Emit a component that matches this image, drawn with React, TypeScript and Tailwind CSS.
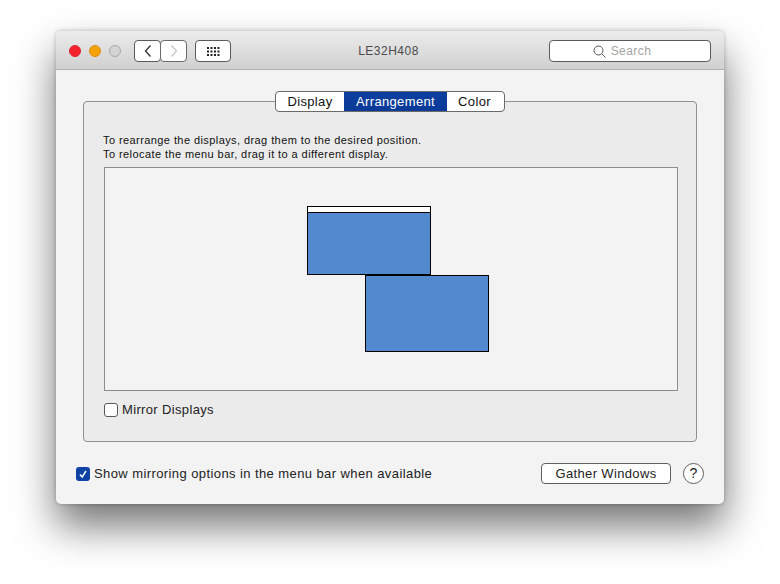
import React from 'react';

const font = { fontFamily: '"Liberation Sans", Arial, sans-serif' };

const TrafficLights = () => (
  <div className="flex gap-2">
    <div className="w-3 h-3 rounded-full bg-[#f5222e] border border-[#d9262f]" />
    <div className="w-3 h-3 rounded-full bg-[#f5a20a] border border-[#d8900f]" />
    <div className="w-3 h-3 rounded-full bg-[#d4d4d4] border border-[#a8a8a8]" />
  </div>
);

const NavButtons = () => (
  <div className="flex ml-[13px]">
    <div className="w-[27px] h-[22px] bg-white border border-[#5a5a5a] rounded-[4px] flex items-center justify-center">
      <svg width="10" height="14" viewBox="0 0 10 14" fill="none">
        <path d="M7.5 1.5 L2.5 7 L7.5 12.5" stroke="#333" strokeWidth="1.3" />
      </svg>
    </div>
    <div className="w-[27px] h-[22px] -ml-px bg-white border border-[#6a6a6a] rounded-[4px] flex items-center justify-center">
      <svg width="10" height="14" viewBox="0 0 10 14" fill="none">
        <path d="M2.5 1.5 L7.5 7 L2.5 12.5" stroke="#c8c8c8" strokeWidth="1.3" />
      </svg>
    </div>
  </div>
);

const GridButton = () => (
  <div className="w-9 h-[22px] ml-2 bg-white border border-[#5a5a5a] rounded-[4px] flex items-center justify-center">
    <svg width="15" height="11" viewBox="0 0 15 11" fill="#222">
      {[0, 1, 2].map((row) =>
        [0, 1, 2, 3].map((col) => (
          <rect key={`${row}-${col}`} x={col * 3.5 + 1} y={row * 3.5 + 1} width="2" height="2" />
        )),
      )}
    </svg>
  </div>
);

const TitleBar = () => (
  <div className="h-[39px] shrink-0 flex items-center pt-[2px] pl-[13px] pr-[13px] rounded-t-[5px] border-b border-[#b1b1b1] bg-gradient-to-b from-[#ececec] to-[#d0d0d0]">
    <TrafficLights />
    <NavButtons />
    <GridButton />
    <div className="flex-1 text-center text-[12px] tracking-[0.5px] text-[#4a4a4a] pr-[3px]">LE32H408</div>
    <div className="w-[162px] h-[22px] bg-white border border-[#5a5a5a] rounded-[4px] flex items-center justify-center gap-[5px] pr-[3px]">
      <svg className="-ml-[13px]" width="13" height="13" viewBox="0 0 13 13" fill="none" stroke="#555" strokeWidth="1">
        <circle cx="5.5" cy="5.5" r="4.5" />
        <path d="M8.8 8.8 L12.5 12.5" />
      </svg>
      <span className="text-[12px] tracking-[0.45px] text-[#a5a5a5]">Search</span>
    </div>
  </div>
);

const Tabs = () => (
  <div className="flex justify-center -mt-[11px] mb-[21px]">
    <div className="flex h-[21px] text-[13px] tracking-[0.35px] leading-[19px] bg-white border border-[#6a6a6a] rounded-[4px] overflow-hidden text-[#111]">
      <div className="w-[68px] text-center">Display</div>
      <div className="w-[103px] text-center text-white bg-gradient-to-b from-[#0d3f9f] to-[#0a3a96]">Arrangement</div>
      <div className="w-[57px] pr-[2px] text-center">Color</div>
    </div>
  </div>
);

const Arrangement = () => (
  <div className="relative w-[574px] h-[224px] ml-5 bg-[#f4f3f4] border border-[#8c8c8c]">
    {/* main display with the menu bar */}
    <div className="absolute left-[202px] top-[38px] w-[124px] h-[69px] bg-[#5389cf] border border-black">
      <div className="h-[5px] bg-white border-b border-black box-content" />
    </div>
    <div className="absolute left-[260px] top-[107px] w-[124px] h-[77px] bg-[#5389cf] border border-black" />
  </div>
);

const Group = () => (
  <div className="w-[614px] h-[341px] ml-[27px] mt-[31px] bg-[#ebebeb] border border-[#8f8f8f] rounded-[4px]">
    <Tabs />
    <p className="ml-[19px] mb-[6px] text-[11px] leading-[14px] tracking-[0.42px] text-[#111]">
      To rearrange the displays, drag them to the desired position.
      <br />
      To relocate the menu bar, drag it to a different display.
    </p>
    <Arrangement />
    <div className="flex items-center ml-5 mt-[9px] gap-[4px]">
      <div className="w-[14px] h-[14px] bg-white border border-[#5a5a5a] rounded-[3px]" />
      <span className="text-[13px] tracking-[0.35px] text-[#222]">Mirror Displays</span>
    </div>
  </div>
);

const Footer = () => (
  <div className="flex items-center ml-5 mr-5 mt-[21px]">
    <div className="w-[14px] h-[14px] bg-[#0f43a3] rounded-[3px] flex items-center justify-center">
      <svg width="10" height="10" viewBox="0 0 10 10" fill="none">
        <path d="M2 5.5 L4.2 8 L8 2" stroke="#fff" strokeWidth="1.5" />
      </svg>
    </div>
    <span className="ml-[4px] flex-1 text-[13px] tracking-[0.41px] text-[#222]">
      Show mirroring options in the menu bar when available
    </span>
    <div className="w-[130px] h-[21px] bg-white border border-[#5f5f5f] rounded-[4px] text-center text-[13px] leading-[19px] tracking-[0.35px] text-[#222]">
      Gather Windows
    </div>
    <div className="w-[21px] h-[21px] ml-[12px] bg-white border border-[#5f5f5f] rounded-full text-center text-[14px] leading-[19px] text-[#222]">
      ?
    </div>
  </div>
);

export default function App() {
  return (
    <div className="w-[780px] h-[584px] bg-white overflow-hidden pt-[31px] pl-[56px]" style={font}>
      <div className="w-[668px] h-[473px] flex flex-col bg-[#f3f3f3] rounded-[5px] shadow-[0_22px_40px_rgba(0,0,0,0.55),0_0_4px_rgba(0,0,0,0.25)]">
        <TitleBar />
        <Group />
        <Footer />
      </div>
    </div>
  );
}
